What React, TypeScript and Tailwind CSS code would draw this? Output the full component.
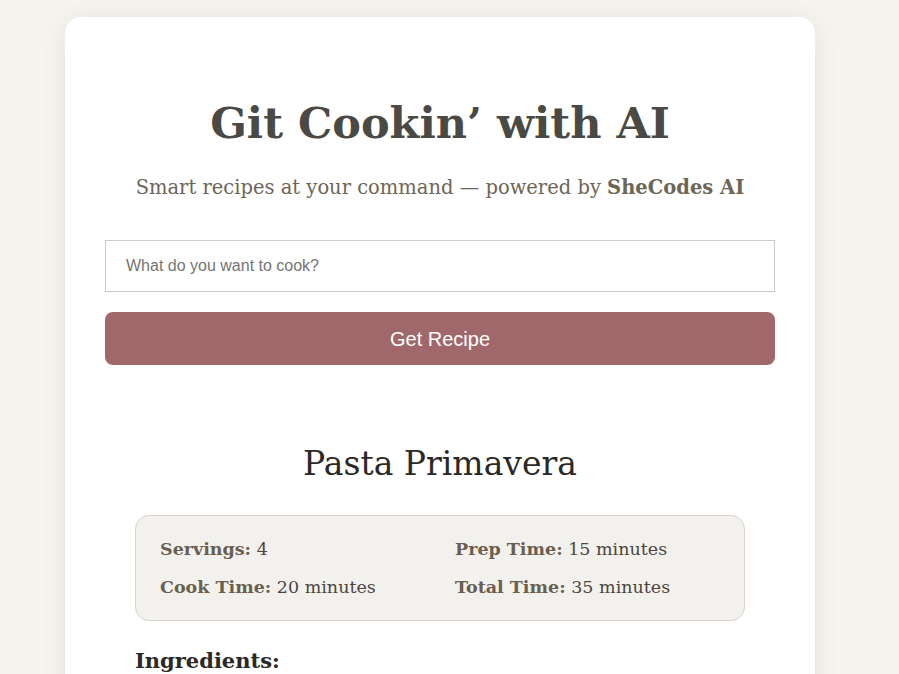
import React, { useState } from 'react';

const serif = { fontFamily: '"DejaVu Serif", "Liberation Serif", serif' };

const App: React.FC = () => {
  const [query, setQuery] = useState('');

  return (
    <div className="min-h-screen bg-[#f6f4ef] pt-[17px] pb-10 pr-[19px]" style={serif}>
      <div className="mx-auto w-[750px] rounded-2xl bg-white px-10 pt-[78px] pb-10 shadow-[0_4px_24px_rgba(90,80,60,0.12)]">
        <h1 className="text-center text-[43px] font-bold leading-[56px] text-[#4a4944]">Git Cookin’ with AI</h1>
        <p className="mt-[23px] text-center text-[19.5px] leading-7 text-[#6d6556]">
          Smart recipes at your command — powered by <strong className="font-bold">SheCodes AI</strong>
        </p>

        <form className="mt-[38px] flex flex-col gap-5" onSubmit={(e) => e.preventDefault()}>
          <input
            type="text"
            value={query}
            onChange={(e) => setQuery(e.target.value)}
            placeholder="What do you want to cook?"
            className="h-[52px] w-full border border-[#cccccc] px-5 text-base text-[#333] placeholder:text-[#757575] focus:outline-none"
            style={{ fontFamily: '"Liberation Sans", Arial, sans-serif' }}
          />
          <button
            type="submit"
            className="h-[53px] w-full rounded-lg bg-[#a0686a] text-xl text-white"
            style={{ fontFamily: '"Liberation Sans", Arial, sans-serif' }}
          >
            Get Recipe
          </button>
        </form>

        <div className="mx-[30px] mt-[75px]">
          <h2 className="text-center text-[33px] leading-[48px] text-[#2b2925]">Pasta Primavera</h2>

          <div className="mt-[27px] grid grid-cols-2 gap-x-[30px] gap-y-[14px] rounded-[14px] border border-[#d9d4cc] bg-[#f3f1ed] px-6 pt-[21px] pb-[21px] text-[17.5px] leading-6 text-[#4c463d]">
            <p><strong className="text-[#6a5f4f]">Servings:</strong> 4</p>
            <p><strong className="text-[#6a5f4f]">Prep Time:</strong> 15 minutes</p>
            <p><strong className="text-[#6a5f4f]">Cook Time:</strong> 20 minutes</p>
            <p><strong className="text-[#6a5f4f]">Total Time:</strong> 35 minutes</p>
          </div>

          <h3 className="mt-6 text-[21px] font-bold leading-8 text-[#2b2925]">Ingredients:</h3>
        </div>
      </div>
    </div>
  );
};

export default App;
